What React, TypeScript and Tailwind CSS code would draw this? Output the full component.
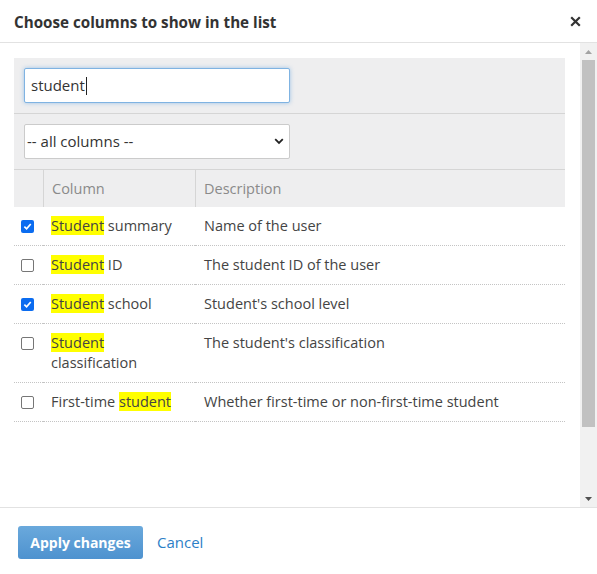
import { Fragment } from "react";

type Row = {
  pre: string;
  hit: string;
  post: string;
  description: string;
  checked: boolean;
};

const rows: Row[] = [
  { pre: "", hit: "Student", post: " summary", description: "Name of the user", checked: true },
  { pre: "", hit: "Student", post: " ID", description: "The student ID of the user", checked: false },
  { pre: "", hit: "Student", post: " school", description: "Student's school level", checked: true },
  { pre: "", hit: "Student", post: " classification", description: "The student's classification", checked: false },
  { pre: "First-time ", hit: "student", post: "", description: "Whether first-time or non-first-time student", checked: false },
];

const Checkbox = ({ checked }: { checked: boolean }) =>
  checked ? (
    <span className="mt-[4px] flex h-[13px] w-[13px] items-center justify-center rounded-[2px] bg-[#0b6cf0]">
      <svg width="9" height="9" viewBox="0 0 10 10">
        <path d="M1.5 5.2 L4 7.6 L8.6 2.2" fill="none" stroke="white" strokeWidth="1.9" />
      </svg>
    </span>
  ) : (
    <span className="mt-[4px] block h-[13px] w-[13px] rounded-[2px] border border-[#767676] bg-white" />
  );

const Scrollbar = () => (
  <div className="flex w-[17px] flex-col items-center bg-[#f1f1f1]">
    <div className="flex h-[17px] items-center justify-center">
      <svg width="7" height="4" viewBox="0 0 7 4">
        <path d="M0 4 L3.5 0 L7 4 Z" fill="#a3a3a3" />
      </svg>
    </div>
    <div className="h-[367px] w-[13px] bg-[#c1c1c1]" />
    <div className="flex-1" />
    <div className="flex h-[17px] items-center justify-center">
      <svg width="7" height="4" viewBox="0 0 7 4">
        <path d="M0 0 L7 0 L3.5 4 Z" fill="#505050" />
      </svg>
    </div>
  </div>
);

const App = () => {
  return (
    <div className="flex h-[574px] w-[597px] flex-col bg-white text-[#333] font-['Open_Sans','Liberation_Sans',sans-serif]">
      {/* header */}
      <div className="flex h-[43px] items-center justify-between border-b border-[#e2e2e2] pl-[14px] pr-[16px] pt-[2px]">
        <h1 className="text-[15.2px] font-bold text-[#333]">Choose columns to show in the list</h1>
        <svg width="11" height="11" viewBox="0 0 11 11" className="mb-[1px]">
          <path d="M1.2 1.2 L9.8 9.8 M9.8 1.2 L1.2 9.8" stroke="#333" strokeWidth="2.2" />
        </svg>
      </div>

      {/* body */}
      <div className="flex h-[464px]">
        <div className="flex-1 pl-[14px] pr-[15px] pt-[15px]">
          <div className="bg-[#eeeeef]">
            <div className="border-b border-[#d5d5d5] px-[10px] py-[10px]">
              <div className="flex h-[35px] w-[266px] items-center rounded-[2px] border border-[#7fb3e2] bg-white px-[6px] text-[15px] shadow-[0_0_4px_rgba(102,165,224,0.6)]">
                student
                <span className="ml-px inline-block h-[18px] w-px bg-[#222]" />
              </div>
            </div>
            <div className="border-b border-[#d5d5d5] px-[10px] py-[10px]">
              <div className="flex h-[35px] w-[266px] items-center justify-between rounded-[2px] border border-[#cbcbcb] bg-white pl-[2px] pr-[5px] text-[15px] text-[#333]">
                <span>-- all columns --</span>
                <svg width="10" height="7" viewBox="0 0 10 7">
                  <path d="M1.2 1.2 L5 5 L8.8 1.2" fill="none" stroke="#222" strokeWidth="1.8" />
                </svg>
              </div>
            </div>
            <div className="grid h-[37px] grid-cols-[29px_152px_1fr] text-[14.5px] text-[#8a8a8a]">
              <div />
              <div className="flex items-center border-l border-[#d5d5d5] pl-[8px]">Column</div>
              <div className="flex items-center border-l border-[#d5d5d5] pl-[8px]">Description</div>
            </div>
          </div>

          <div className="grid grid-cols-[29px_152px_1fr] text-[14.5px] leading-[20px] text-[#444]">
            {rows.map((row, i) => (
              <Fragment key={i}>
                <div className="flex justify-end border-b border-dotted border-[#c4c4c4] pr-[9px] pt-[9px] pb-[9px]">
                  <Checkbox checked={row.checked} />
                </div>
                <div className="border-b border-dotted border-[#c4c4c4] py-[9px] pl-[8px] pr-[6px]">
                  {row.pre}
                  <span className="bg-[#ffff00]">{row.hit}</span>
                  {row.post}
                </div>
                <div className="border-b border-dotted border-[#c4c4c4] py-[9px] pl-[9px]">{row.description}</div>
              </Fragment>
            ))}
          </div>
        </div>
        <Scrollbar />
      </div>

      {/* footer */}
      <div className="flex flex-1 items-center gap-[14px] border-t border-[#e2e2e2] pl-[18px] pt-[3px]">
        <button className="h-[33px] w-[125px] rounded-[3px] bg-gradient-to-b from-[#6aa9dc] to-[#4e92cf] text-[14px] font-bold text-white">
          Apply changes
        </button>
        <span className="text-[15px] text-[#2d80c7]">Cancel</span>
      </div>
    </div>
  );
};

export default App;
